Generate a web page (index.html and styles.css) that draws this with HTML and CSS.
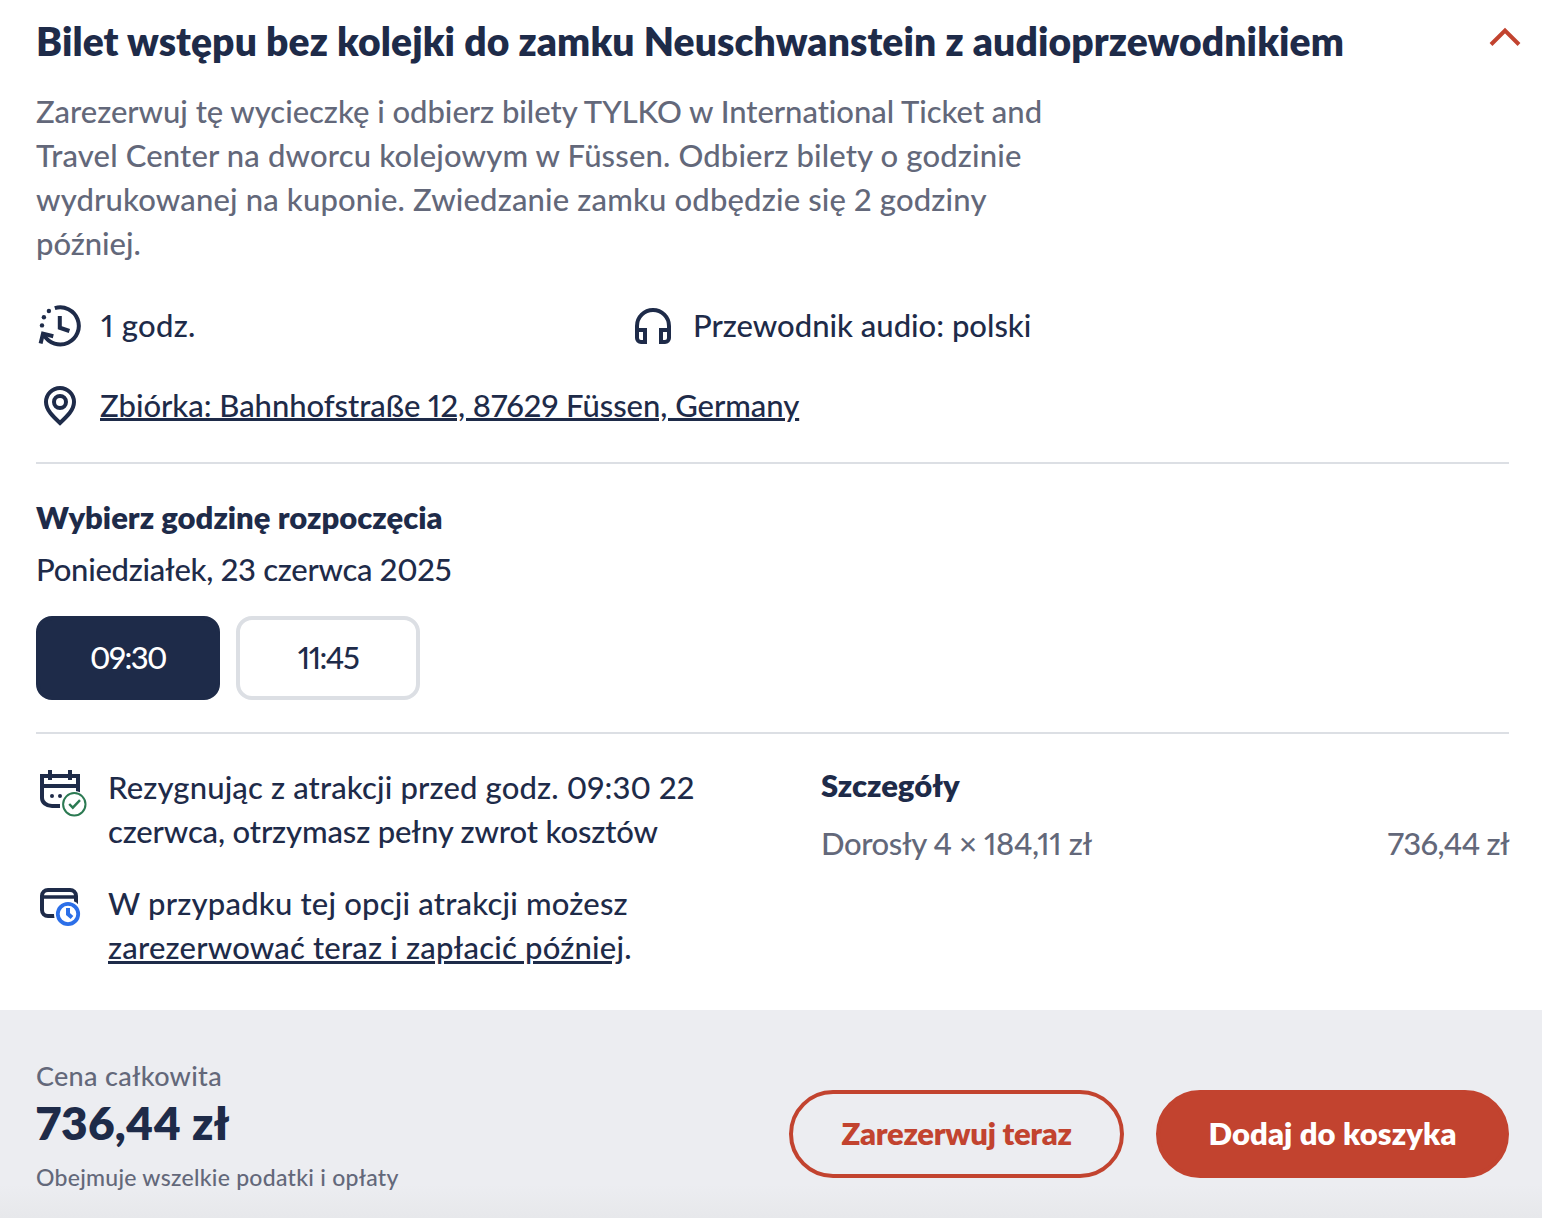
FILE: index.html
```html
<!DOCTYPE html>
<html lang="pl">
<head>
  <meta charset="UTF-8" />
  <meta name="viewport" content="width=device-width, initial-scale=1.0" />
  <title>Bilet wstępu - Neuschwanstein</title>
  <link rel="stylesheet" href="styles.css">
</head>
<body>
  <div class="option">
    <div class="header">
      <h2 class="title">Bilet wstępu bez kolejki do zamku Neuschwanstein z audioprzewodnikiem</h2>
      <svg class="chevron" width="32" height="20" viewBox="0 0 32 20" fill="none" stroke="#c2432f" stroke-width="4"><path d="M2 17.500 16 3.500 30 17.500"/></svg>
    </div>
    <p class="desc">Zarezerwuj tę wycieczkę i odbierz bilety TYLKO w International Ticket and<br><span class="wide">Travel Center na dworcu kolejowym w Füssen. Odbierz bilety o godzinie<br>wydrukowanej na kuponie. Zwiedzanie zamku odbędzie się 2 godziny</span><br>później.</p>

    <div class="facts">
      <div class="fact">
        <svg class="icon" viewBox="0 0 48 48" fill="none" stroke="#1e2b49" stroke-width="4">
          <path d="M18.800 5.100A18.600 18.600 0 1 1 8 32"/>
          <path d="M4.600 40.500 7 30.600 17.300 33.200" />
          <path d="M23.800 13v11.700l9.600 3.300"/>
          <g fill="#1e2b49" stroke="none"><circle cx="12.900" cy="8" r="2.200"/><circle cx="7.900" cy="14.200" r="2.200"/><circle cx="6" cy="22.400" r="2.200"/></g>
        </svg>
        <span class="hour">1 godz.</span>
      </div>
      <div class="fact">
        <svg class="icon" viewBox="0 0 48 48" fill="none" stroke="#1e2b49" stroke-width="4">
          <path d="M8 27V23a16 16 0 0 1 32 0v4"/>
          <path d="M8 27h8v12h-4a4 4 0 0 1-4-4zM40 27h-8v12h4a4 4 0 0 0 4-4z"/>
        </svg>
        <span class="audio">Przewodnik audio: polski</span>
      </div>
    </div>
    <div class="fact place">
      <svg class="icon" viewBox="0 0 48 48" fill="none" stroke="#1e2b49" stroke-width="4">
        <path d="M24 40C17 33.500 10 27 10 19a14 14 0 0 1 28 0C38 27 31 33.500 24 40z"/>
        <circle cx="24" cy="19" r="6"/>
      </svg>
      <a class="address">Zbiórka: Bahnhofstraße 12, 87629 Füssen, Germany</a>
    </div>

    <div class="times">
      <h3 class="times-title">Wybierz godzinę rozpoczęcia</h3>
      <div class="date">Poniedziałek, 23 czerwca 2025</div>
      <div class="slots">
        <button class="slot selected">09:30</button>
        <button class="slot">11:45</button>
      </div>
    </div>

    <div class="info">
      <div class="policies">
        <div class="policy">
          <svg width="52" height="52" viewBox="0 0 52 52" fill="none" stroke="#1e2b49" stroke-width="4">
            <path d="M24 38h-8a10 8 0 0 1-10-8V8h36v17M6 18h36M14 2v10M34 2v10"/>
            <g fill="#1e2b49" stroke="none"><circle cx="16" cy="28" r="2"/><circle cx="24" cy="28" r="2"/></g>
            <circle cx="38.300" cy="36.300" r="13.200" fill="#fff" stroke="none"/>
            <circle cx="38.300" cy="36.300" r="11.200" stroke="#2b7a52" stroke-width="2"/>
            <path d="M33.200 36l3.600 3.700 7.200-7.600" stroke="#2b7a52" stroke-width="2.400"/>
          </svg>
          <p class="cancel">Rezygnując z atrakcji przed godz. 09:30 22<br><span class="tight">czerwca, otrzymasz pełny zwrot kosztów</span></p>
        </div>
        <div class="policy">
          <svg width="52" height="52" viewBox="0 0 52 52" fill="none" stroke="#1e2b49" stroke-width="4">
            <path d="M20 32h-8a6 6 0 0 1-6-6V12a6 6 0 0 1 6-6h22a6 6 0 0 1 6 6v10"/>
            <path d="M6 13h34" stroke-width="3.600"/>
            <circle cx="32" cy="30" r="14" fill="#fff" stroke="none"/>
            <circle cx="32" cy="30" r="10.200" stroke="#2c6fe8" stroke-width="3.800"/>
            <path d="M32 24v6l4 3.500" stroke="#2c6fe8"/>
          </svg>
          <p class="later">W przypadku tej opcji atrakcji możesz<br><a>zarezerwować teraz i zapłacić później</a>.</p>
        </div>
      </div>
      <div class="details">
        <h3 class="details-title">Szczegóły</h3>
        <div class="price-row">
          <span class="guests">Dorosły 4 × 184,11 zł</span>
          <span class="amount">736,44 zł</span>
        </div>
      </div>
    </div>
  </div>

  <div class="footer">
    <div class="total">
      <div class="total-label">Cena całkowita</div>
      <div class="total-price">736,44 zł</div>
      <div class="total-note">Obejmuje wszelkie podatki i opłaty</div>
    </div>
    <div class="actions">
      <button class="btn outline">Zarezerwuj teraz</button>
      <button class="btn primary">Dodaj do koszyka</button>
    </div>
  </div>
</body>
</html>
```
FILE: styles.css
```css
* {
  box-sizing: border-box;
}
body {
  margin: 0;
  font-family: Lato, "Open Sans", sans-serif;
  font-size: 31px;
  font-weight: 500;
  font-variant-numeric: proportional-nums;
  line-height: 44px;
  color: #1e2b49;
  background: white;
}
h2, h3, p {
  margin: 0;
}
button {
  font: inherit;
  font-variant-numeric: proportional-nums;
  cursor: pointer;
}
svg {
  display: block;
  flex-shrink: 0;
}
.option {
  height: 1010px;
  padding: 17px 33px 0 36px;
}
.header {
  display: flex;
  justify-content: space-between;
  height: 48px;
}
.title {
  font-size: 39px;
  font-weight: 800;
  line-height: 48px;
  letter-spacing: 0.1px;
  white-space: nowrap;
}
.chevron {
  margin: 10px -12px 0 0;
}
.desc {
  margin-top: 24px;
  color: #63687a;
  letter-spacing: -0.03px;
  white-space: nowrap;
}
.wide {
  letter-spacing: 0.16px;
}
.facts {
  display: grid;
  grid-template-columns: 593px 1fr;
  margin-top: 36px;
}
.fact {
  display: flex;
  align-items: center;
  gap: 16px;
  height: 48px;
  white-space: nowrap;
}
.icon {
  width: 48px;
  height: 48px;
  margin-top: 4px;
}
.hour {
  padding-left: 1px;
  letter-spacing: 0.3px;
}
.place {
  margin-top: 32px;
}
.address {
  letter-spacing: -0.04px;
}
.address, .later a {
  text-decoration: underline;
  text-decoration-thickness: 3px;
  text-underline-offset: 2px;
}
.address {
  text-underline-offset: 1px;
}
.times {
  margin-top: 33px;
  padding: 31px 0 32px;
  border-top: 2px solid #dcdfe4;
  border-bottom: 2px solid #dcdfe4;
}
.times-title, .details-title {
  font-size: 31px;
  font-weight: 800;
}
.date {
  margin-top: 8px;
  letter-spacing: -0.27px;
}
.slots {
  display: flex;
  gap: 16px;
  margin-top: 25px;
}
.slot {
  width: 184px;
  height: 84px;
  padding: 0 0 2px;
  border: 4px solid #dcdfe4;
  border-radius: 16px;
  background: white;
  color: #1e2b49;
  letter-spacing: -1.5px;
}
.selected {
  background: #1e2b49;
  border-color: #1e2b49;
  color: white;
}
.info {
  display: grid;
  grid-template-columns: 785px 1fr;
  padding-top: 31px;
}
.policy {
  display: flex;
  gap: 20px;
  margin-bottom: 28px;
  white-space: nowrap;
}
.policy svg {
  margin-top: 3px;
}
.cancel, .later {
  letter-spacing: 0.15px;
}
.later {
  letter-spacing: 0.2px;
}
.tight {
  letter-spacing: -0.14px;
}
.details {
  margin-top: -2px;
}
.price-row {
  display: flex;
  justify-content: space-between;
  margin-top: 14px;
  color: #63687a;
}
.guests {
  letter-spacing: -0.4px;
}
.amount {
  letter-spacing: -0.7px;
}
.footer {
  display: flex;
  justify-content: space-between;
  height: 208px;
  padding: 48px 33px 0 36px;
  background: linear-gradient(#ecedf1 84%, #e7e8eb);
}
.total-label {
  font-size: 27px;
  line-height: 36px;
  letter-spacing: 0.3px;
  color: #63687a;
}
.total-price {
  font-size: 46px;
  font-weight: 800;
  line-height: 58px;
  letter-spacing: 0.1px;
}
.total-note {
  margin-top: 9px;
  font-size: 23px;
  line-height: 32px;
  letter-spacing: 0.27px;
  color: #63687a;
}
.actions {
  display: flex;
  gap: 32px;
  padding-top: 32px;
}
.btn {
  height: 88px;
  padding: 0 0 2px;
  border: 4px solid #c2432f;
  border-radius: 44px;
  font-weight: 800;
}
.outline {
  width: 335px;
  background: transparent;
  color: #c2432f;
  letter-spacing: -0.3px;
}
.primary {
  width: 353px;
  background: #c2432f;
  color: white;
  letter-spacing: 0.1px;
}
```
